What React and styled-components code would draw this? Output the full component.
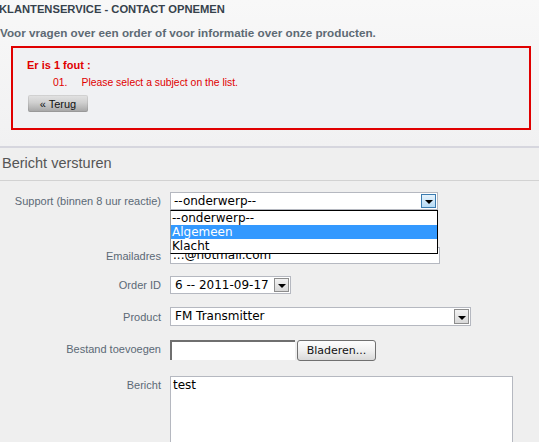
import React from 'react';
import styled, { createGlobalStyle } from 'styled-components';

const GlobalStyle = createGlobalStyle`
  body {
    margin: 0;
    background: #efefef;
    font-family: "Liberation Sans", Arial, sans-serif;
  }
`;

const Page = styled.div`
  width: 539px;
  height: 442px;
  overflow: hidden;
`;

const Header = styled.div`
  height: 148px;
  background: linear-gradient(#f8f8f8, #f1f1f2);
  border-bottom: 2px solid #d6d6de;
  padding-top: 2px;
  box-sizing: border-box;
`;

const Title = styled.h1`
  margin: 0 0 0 -1px;
  font-size: 11.2px;
  line-height: 14px;
  font-weight: bold;
  color: #36424c;
`;

const Intro = styled.p`
  margin: 10px 0 0 0;
  font-size: 11.7px;
  line-height: 13px;
  font-weight: bold;
  color: #5d6a74;
`;

const ErrorBox = styled.div`
  margin: 7px 0 0 11px;
  width: 520px;
  height: 84px;
  box-sizing: border-box;
  border: 2px solid #e00000;
  background: #f0f1f3;
  padding: 11px 0 0 14px;
  color: #e00000;
  font-size: 11px;
`;

const ErrorTitle = styled.div`
  font-weight: bold;
  line-height: 13px;
`;

const ErrorItem = styled.div`
  display: flex;
  gap: 14px;
  margin: 4px 0 0 26px;
  line-height: 13px;
  font-size: 10.4px;
`;

const BackButton = styled.button`
  display: block;
  margin: 6px 0 0 1px;
  width: 60px;
  height: 17px;
  padding: 0;
  border: none;
  border-radius: 2px;
  background: linear-gradient(#e4e4e4, #cfcfcf 45%, #a4a4a4);
  box-shadow: inset 0 0 0 1px rgba(0, 0, 0, 0.08);
  font-family: "Liberation Sans", Arial, sans-serif;
  font-size: 11px;
  color: #111;
`;

const SectionTitle = styled.h2`
  margin: 0;
  height: 33px;
  box-sizing: border-box;
  padding: 7px 0 0 2px;
  border-bottom: 1px solid #d2d2d2;
  font-size: 14.5px;
  line-height: 16px;
  font-weight: normal;
  color: #555;
`;

const Form = styled.div`
  display: grid;
  grid-template-columns: 161px 1fr;
  column-gap: 9px;
  padding-top: 11px;
`;

const Label = styled.div`
  text-align: right;
  font-size: 11px;
  line-height: 13px;
  color: #5b6976;
  padding-top: ${(p) => p.$offset || 3}px;
  margin-bottom: ${(p) => p.$gap}px;
`;

const Field = styled.div`
  position: relative;
  display: flex;
  gap: 2px;
  margin-bottom: ${(p) => p.$gap}px;
`;

const SelectBox = styled.div`
  position: relative;
  width: ${(p) => p.$width}px;
  height: ${(p) => p.$height || 18}px;
  box-sizing: border-box;
  border: 1px solid #b5b8c0;
  background: #fff;
  font-family: "DejaVu Sans", Verdana, sans-serif;
  font-size: 12px;
  line-height: 16px;
  padding-left: ${(p) => p.$pad || 2}px;
  color: #000;
  white-space: nowrap;
`;

const Arrow = styled.div`
  position: absolute;
  top: 1px;
  right: 1px;
  width: 15px;
  bottom: 1px;
  box-sizing: border-box;
  border: 1px solid ${(p) => (p.$focus ? '#3a7bb0' : '#8d8d8d')};
  background: ${(p) =>
    p.$focus ? 'linear-gradient(#e6f3fd, #b7dbf5)' : 'linear-gradient(#f2f2f2, #d8d8d8)'};
  display: flex;
  align-items: center;
  justify-content: center;

  &::after {
    content: '';
    border-left: 4px solid transparent;
    border-right: 4px solid transparent;
    border-top: 4px solid #000;
    margin-top: 2px;
  }
`;

const OptionList = styled.div`
  position: absolute;
  top: 17px;
  left: -1px;
  width: 268px;
  box-sizing: border-box;
  border: 1px solid #000;
  border-left-color: #999;
  background: #fff;
  z-index: 2;
`;

const Option = styled.div`
  height: 14px;
  line-height: 14px;
  font-size: 12px;
  padding-left: 1px;
  color: ${(p) => (p.$active ? '#fff' : '#000')};
  background: ${(p) => (p.$active ? '#3399ff' : 'transparent')};
`;

const TextInput = styled.div`
  width: ${(p) => p.$width}px;
  height: 17px;
  box-sizing: border-box;
  border: 1px solid #b5b8c0;
  background: #fff;
  font-family: "DejaVu Sans", Verdana, sans-serif;
  font-size: 12px;
  line-height: 15px;
  padding-left: 2px;
`;

const FileInput = styled.div`
  width: 125px;
  height: 20px;
  box-sizing: border-box;
  border-top: 2px solid #6f6f6f;
  border-left: 2px solid #6f6f6f;
  background: #fff;
`;

const BrowseButton = styled.button`
  width: 79px;
  height: 21px;
  padding: 0;
  border: 1px solid #707070;
  border-radius: 3px;
  background: linear-gradient(#fdfdfd, #f0f0f0 50%, #d9d9d9);
  font-family: "DejaVu Sans", Verdana, sans-serif;
  font-size: 11px;
  color: #111;
`;

const TextArea = styled.div`
  width: 343px;
  height: 90px;
  box-sizing: border-box;
  border: 1px solid #b5b8c0;
  background: #fff;
  font-family: "DejaVu Sans", Verdana, sans-serif;
  font-size: 12px;
  line-height: 15px;
  padding: 1px 2px;
`;

export default function App() {
  return (
    <Page>
      <GlobalStyle />
      <Header>
        <Title>KLANTENSERVICE - CONTACT OPNEMEN</Title>
        <Intro>Voor vragen over een order of voor informatie over onze producten.</Intro>
        <ErrorBox>
          <ErrorTitle>Er is 1 fout :</ErrorTitle>
          <ErrorItem>
            <span>01.</span>
            <span>Please select a subject on the list.</span>
          </ErrorItem>
          <BackButton>« Terug</BackButton>
        </ErrorBox>
      </Header>
      <SectionTitle>Bericht versturen</SectionTitle>
      <Form>
        <Label $gap={37}>Support (binnen 8 uur reactie)</Label>
        <Field $gap={37}>
          <SelectBox $width={268} $pad={3}>
            --onderwerp--
            <Arrow $focus />
            <OptionList>
              <Option>--onderwerp--</Option>
              <Option $active>Algemeen</Option>
              <Option>Klacht</Option>
            </OptionList>
          </SelectBox>
        </Field>

        <Label $gap={12}>Emailadres</Label>
        <Field $gap={12}>
          <TextInput $width={270}>...@hotmail.com</TextInput>
        </Field>

        <Label $gap={13}>Order ID</Label>
        <Field $gap={13}>
          <SelectBox $width={121} $pad={4}>
            6 -- 2011-09-17
            <Arrow />
          </SelectBox>
        </Field>

        <Label $gap={14} $offset={4}>Product</Label>
        <Field $gap={14}>
          <SelectBox $width={301} $height={19} $pad={4}>
            FM Transmitter
            <Arrow />
          </SelectBox>
        </Field>

        <Label $gap={15}>Bestand toevoegen</Label>
        <Field $gap={15}>
          <FileInput />
          <BrowseButton>Bladeren...</BrowseButton>
        </Field>

        <Label $gap={0}>Bericht</Label>
        <Field $gap={0}>
          <TextArea>test</TextArea>
        </Field>
      </Form>
    </Page>
  );
}
